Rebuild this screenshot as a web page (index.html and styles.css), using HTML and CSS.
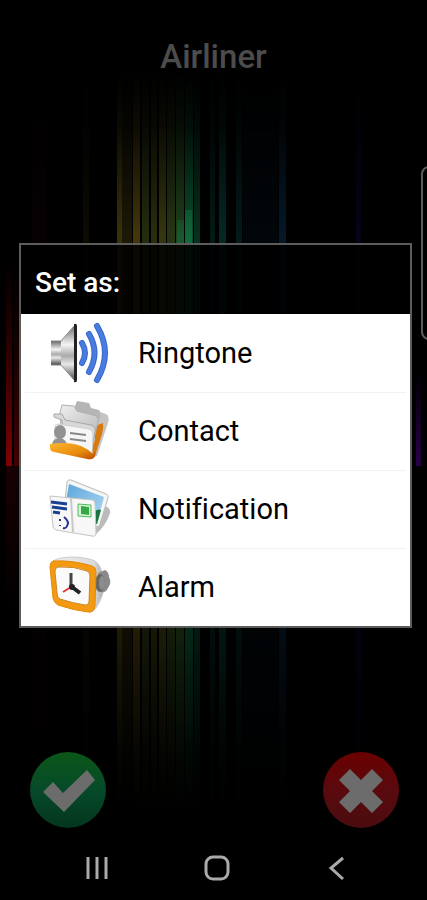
FILE: index.html
```html
<!DOCTYPE html>
<html lang="en">
<head>
  <meta charset="utf-8">
  <meta name="viewport" content="width=device-width, initial-scale=1">
  <title>Airliner</title>
  <link rel="stylesheet" href="styles.css">
</head>
<body>
  <div class="screen">
    <svg class="backdrop" viewBox="0 0 427 900" preserveAspectRatio="none" aria-hidden="true">
      <defs>
        <linearGradient id="fade" x1="0" y1="0" x2="0" y2="1">
          <stop offset="0.08" stop-color="#000"/>
          <stop offset="0.14" stop-color="#333"/>
          <stop offset="0.2" stop-color="#999"/>
          <stop offset="0.26" stop-color="#fff"/>
          <stop offset="0.51" stop-color="#fff"/>
          <stop offset="0.52" stop-color="#999"/>
          <stop offset="0.68" stop-color="#999"/>
          <stop offset="0.76" stop-color="#555"/>
          <stop offset="0.84" stop-color="#1a1a1a"/>
          <stop offset="0.9" stop-color="#000"/>
        </linearGradient>
        <linearGradient id="red" x1="0" y1="0" x2="0" y2="1">
          <stop offset="0" stop-color="#700000" stop-opacity="0"/>
          <stop offset="0.4" stop-color="#700000" stop-opacity="0.35"/>
          <stop offset="1" stop-color="#800000"/>
        </linearGradient>
        <linearGradient id="purple" x1="0" y1="0" x2="0" y2="1">
          <stop offset="0" stop-color="#280048" stop-opacity="0"/>
          <stop offset="1" stop-color="#280048"/>
        </linearGradient>
        <linearGradient id="ember" x1="0" y1="0" x2="0" y2="1">
          <stop offset="0" stop-color="#180003"/>
          <stop offset="1" stop-color="#180003" stop-opacity="0"/>
        </linearGradient>
        <linearGradient id="glow" x1="0" y1="0" x2="0" y2="1">
          <stop offset="0" stop-color="#126a3c" stop-opacity="0.5"/>
          <stop offset="1" stop-color="#126a3c"/>
        </linearGradient>
        <mask id="fade-mask"><rect width="427" height="900" fill="url(#fade)"/></mask>
      </defs>
      <g mask="url(#fade-mask)">
        <rect x="32" y="60" width="14" height="800" fill="#080103"/>
        <rect x="83" y="60" width="6" height="800" fill="#0d0a02"/>
        <rect x="117" y="60" width="5" height="800" fill="#38320a"/>
        <rect x="122" y="60" width="10" height="800" fill="#1c1805"/>
        <rect x="133" y="60" width="7" height="800" fill="#42360a"/>
        <rect x="142" y="60" width="7" height="800" fill="#242c0e"/>
        <rect x="151" y="60" width="6" height="800" fill="#2c2c0c"/>
        <rect x="159" y="60" width="7" height="800" fill="#34360f"/>
        <rect x="167" y="60" width="8" height="800" fill="#263612"/>
        <rect x="176" y="60" width="8" height="800" fill="#1f401a"/>
        <rect x="185" y="60" width="8" height="800" fill="#0a4d2a"/>
        <rect x="194" y="60" width="6" height="800" fill="#063020"/>
        <rect x="210" y="60" width="5" height="800" fill="#031a15"/>
        <rect x="219" y="60" width="7" height="800" fill="#042824"/>
        <rect x="236" y="60" width="6" height="800" fill="#031a1a"/>
        <rect x="243" y="60" width="35" height="800" fill="#01060a"/>
        <rect x="279" y="60" width="7" height="800" fill="#041828"/>
        <rect x="356" y="60" width="5" height="800" fill="#070218"/>
      </g>
      <rect x="185" y="210" width="7" height="34" fill="url(#glow)"/>
      <rect x="177" y="220" width="7" height="24" fill="url(#glow)" opacity="0.7"/>
      <rect x="6" y="260" width="6" height="206" fill="url(#red)"/>
      <rect x="14" y="260" width="5" height="206" fill="url(#red)" opacity="0.5"/>
      <rect x="6" y="466" width="12" height="150" fill="url(#ember)"/>
      <rect x="416" y="370" width="5" height="96" fill="url(#purple)"/>
    </svg>
    <div class="edge-handle"></div>

    <header class="title-bar">
      <h1>Airliner</h1>
    </header>

    <main class="content">
      <section class="dialog" role="dialog" aria-labelledby="dialog-title">
        <h2 class="dialog-title" id="dialog-title">Set as:</h2>
        <ul class="options">
          <li>
            <button class="option" type="button">
              <svg class="option-icon" viewBox="0 0 62 62" aria-hidden="true">
                <defs>
                  <linearGradient id="metal" x1="0" y1="0" x2="0" y2="1">
                    <stop offset="0" stop-color="#666"/>
                    <stop offset="0.35" stop-color="#f4f4f4"/>
                    <stop offset="0.55" stop-color="#aaa"/>
                    <stop offset="0.7" stop-color="#e8e8e8"/>
                    <stop offset="1" stop-color="#444"/>
                  </linearGradient>
                </defs>
                <path d="M2 19H14V43H2Z" fill="url(#metal)"/>
                <path d="M12 19L26 3V59L12 43Z" fill="url(#metal)"/>
                <path d="M2 19H12L26 3M2 43H12L26 59" fill="none" stroke="#888"/>
                <path d="M25 2Q28 1 28 4V58Q28 61 25 60Z" fill="#222"/>
                <g fill="none" stroke="#3569c9" stroke-width="6" stroke-linecap="round">
                  <path d="M33 21Q39 31 33 41"/>
                  <path d="M40 12Q51 31 40 50"/>
                  <path d="M48 4Q64 31 48 58"/>
                </g>
                <g fill="none" stroke="#4a7be0" stroke-width="4" stroke-linecap="round">
                  <path d="M33 21Q39 31 33 41"/>
                  <path d="M40 12Q51 31 40 50"/>
                  <path d="M48 4Q64 31 48 58"/>
                </g>
              </svg>
              <span>Ringtone</span>
            </button>
          </li>
          <li>
            <button class="option" type="button">
              <svg class="option-icon" viewBox="0 0 62 62" aria-hidden="true">
                <defs>
                  <linearGradient id="folder" x1="0" y1="0" x2="1" y2="1">
                    <stop offset="0" stop-color="#ffb52e"/>
                    <stop offset="0.6" stop-color="#e88a0c"/>
                    <stop offset="1" stop-color="#b84a00"/>
                  </linearGradient>
                  <linearGradient id="paper" x1="0" y1="0" x2="1" y2="1">
                    <stop offset="0" stop-color="#eee"/>
                    <stop offset="1" stop-color="#b8b8b8"/>
                  </linearGradient>
                </defs>
                <path d="M48 11L57 14Q61 16 59 23L48 56L42 57Z" fill="#c4c4c4"/>
                <path d="M46 26L54 23Q55 28 53 34L46 56Q44 60 39 59L46 40Z" fill="#d9780c"/>
                <path d="M26 6L28 1L40 3L42 8L50 10Q52 12 51 17L47 30L24 16Z" fill="#b5b5b5"/>
                <path d="M11 12L13 5L25 6L28 11L44 15Q50 16 49 22L45 38L12 28Z" fill="url(#paper)" stroke="#b0b0b0"/>
                <path d="M5 14L13 14L16 20L42 25Q47 26 46 32L43 46L14 36L13 20L5 17Z" fill="#d8d8d8" stroke="#a8a8a8"/>
                <path d="M6 27Q6 24 9 24L40 29Q44 30 44 34L43 54L6 46Z" fill="#f6f6f6" stroke="#d0d0d0"/>
                <ellipse cx="11" cy="32" rx="6" ry="7" fill="#929292"/>
                <path d="M3 46Q3 38 11 38Q18 39 18 47Z" fill="#929292"/>
                <path d="M21 33L37 35M21 39L37 41" stroke="#888" stroke-width="2"/>
                <path d="M1 44Q20 41 32 46Q39 49 44 54L48 46L46 56Q44 60 38 59L5 52Q1 51 1 48Z" fill="url(#folder)"/>
              </svg>
              <span>Contact</span>
            </button>
          </li>
          <li>
            <button class="option" type="button">
              <svg class="option-icon" viewBox="0 0 62 62" aria-hidden="true">
                <defs>
                  <linearGradient id="sky" x1="0" y1="0" x2="1" y2="1">
                    <stop offset="0" stop-color="#5aa5dc"/>
                    <stop offset="1" stop-color="#b5dcf3"/>
                  </linearGradient>
                </defs>
                <path d="M56 28Q62 30 61 35Q57 48 46 57L48 43Z" fill="#bbb"/>
                <path d="M18 4Q19 1 22 2L57 16Q60 17 59 20L50 49L15 34Z" fill="#f6f6f6" stroke="#b8b8b8"/>
                <path d="M20 6L55 19L48 46L16 28Z" fill="url(#sky)"/>
                <path d="M44 35Q48 30 52 32L48 46L43 46Z" fill="#18733c"/>
                <path d="M1 18L43 22Q46 22 46 25L47 55Q47 59 43 58L7 52Q4 51 4 48Z" fill="#f7f7f7" stroke="#c4c4c4"/>
                <path d="M22 20L24 54" stroke="#c8c8c8" stroke-width="2"/>
                <path d="M2 24L18 26M3 29L18 31M4 34L11 35" stroke="#183f91" stroke-width="3"/>
                <path d="M15 39Q21 44 18 48Q17 51 14 50M11 41V43M11 47V48" fill="none" stroke="#29328e" stroke-width="2"/>
                <path d="M29 26L42 27V39L29 38Z" fill="#d6f3d4" stroke="#53b95c"/>
                <path d="M32 28L40 29V37L32 36Z" fill="#36a846"/>
              </svg>
              <span>Notification</span>
            </button>
          </li>
          <li>
            <button class="option" type="button">
              <svg class="option-icon" viewBox="0 0 62 62" aria-hidden="true">
                <defs>
                  <linearGradient id="case" x1="0" y1="0" x2="1" y2="0">
                    <stop offset="0" stop-color="#eee"/>
                    <stop offset="0.8" stop-color="#dadada"/>
                    <stop offset="1" stop-color="#aaa"/>
                  </linearGradient>
                </defs>
                <path d="M4 5Q10 1 26 1Q40 2 46 5Q51 8 53 17L55 34Q50 51 43 56L36 20Z" fill="url(#case)" stroke="#ccc"/>
                <path d="M49 17L56 14Q60 16 60 21Q63 27 59 32Q57 37 52 36Z" fill="#8a8a8a"/>
                <ellipse cx="51" cy="27" rx="5" ry="9" fill="#666"/>
                <ellipse cx="53" cy="27" rx="3" ry="7" fill="#8c8c8c"/>
                <path d="M4 5Q24 4 43 10Q47 11 47 16L46 50Q45 57 39 56Q23 54 9 49Q5 47 4 42L1 11Q1 6 4 5Z" fill="#f49a10" stroke="#e28a08"/>
                <path d="M10 11Q25 10 38 15Q41 16 41 20L40 46Q39 50 36 49Q23 47 11 43Q8 42 8 37L6 16Q6 11 10 11Z" fill="#fafafa" stroke="#ca8528"/>
                <path d="M22 17V31" stroke="#444" stroke-width="3"/>
                <path d="M23 31L31 37" stroke="#222" stroke-width="4"/>
                <path d="M22 31L14 36" stroke="#e23838" stroke-width="2"/>
                <circle cx="23" cy="31" r="3" fill="#222"/>
              </svg>
              <span>Alarm</span>
            </button>
          </li>
        </ul>
      </section>
    </main>

    <div class="actions">
      <button class="round-button confirm" type="button" aria-label="Confirm">
        <svg viewBox="0 0 76 76" aria-hidden="true">
          <path d="M13 40L23 30L33 41L57 18L65 28L34 60Z" fill="#6c6c6c"/>
        </svg>
      </button>
      <button class="round-button cancel" type="button" aria-label="Cancel">
        <svg viewBox="0 0 76 76" aria-hidden="true">
          <path d="M27 17L38 28L49 17L60 28L49 39L60 50L49 61L38 50L27 61L16 50L27 39L16 28Z" fill="#6c6c6c"/>
        </svg>
      </button>
    </div>

    <nav class="system-nav">
      <button type="button" aria-label="Recent apps">
        <svg viewBox="0 0 28 28" aria-hidden="true"><path d="M5 3V25M14 3V25M23 3V25" stroke-width="3"/></svg>
      </button>
      <button type="button" aria-label="Home">
        <svg viewBox="0 0 28 28" aria-hidden="true"><rect x="3" y="3" width="22" height="22" rx="7" stroke-width="3"/></svg>
      </button>
      <button type="button" aria-label="Back">
        <svg viewBox="0 0 28 28" aria-hidden="true"><path d="M20 4L8 14L20 25" stroke-width="3"/></svg>
      </button>
    </nav>
  </div>
</body>
</html>
```
FILE: styles.css
```css
* {
  box-sizing: border-box;
}

body {
  margin: 0;
  background-color: #000;
  font-family: Roboto, "Noto Sans", sans-serif;
}

button {
  border: none;
  padding: 0;
  font-family: inherit;
  cursor: pointer;
}

.screen {
  position: relative;
  display: flex;
  flex-direction: column;
  min-height: 100vh;
  overflow: hidden;
  isolation: isolate;
}

.backdrop {
  position: absolute;
  inset: 0;
  width: 100%;
  height: 100%;
  z-index: -1;
}

.edge-handle {
  position: absolute;
  top: 166px;
  right: -16px;
  width: 22px;
  height: 174px;
  border: 2px solid #5c5c5c;
  border-radius: 8px;
}

.title-bar {
  height: 118px;
  padding-top: 37px;
  text-align: center;
}

.title-bar h1 {
  margin: 0;
  color: #4c4c4c;
  font-size: 33px;
  font-weight: 500;
  line-height: 40px;
}

.content {
  flex: 1;
  display: flex;
  align-items: center;
  padding: 0 15px 0 19px;
}

.dialog {
  flex: 1;
  border: 2px solid #5c5c5c;
}

.dialog-title {
  margin: 0;
  padding: 18px 14px 11px;
  background-color: rgba(0, 0, 0, 0.85);
  color: #fff;
  font-size: 28px;
  font-weight: 500;
  line-height: 40px;
}

.options {
  margin: 0;
  padding: 0;
  background-color: #fff;
  list-style: none;
}

.options li {
  padding: 0 4px;
}

.options li + li .option {
  border-top: 1px solid #f2f2f2;
}

.option {
  display: flex;
  align-items: center;
  gap: 27px;
  width: 100%;
  height: 78px;
  padding: 0 24px;
  background-color: transparent;
  color: #000;
  font-size: 29px;
  font-variant-ligatures: none;
  text-align: left;
}

.option-icon {
  width: 62px;
  height: 62px;
}

.actions {
  display: flex;
  justify-content: space-between;
  padding: 0 28px 8px 30px;
}

.round-button {
  width: 76px;
  height: 76px;
  border-radius: 50%;
}

.round-button svg {
  display: block;
}

.confirm {
  background: linear-gradient(#0b5718, #064a2a 50%, #04351d);
}

.cancel {
  background: linear-gradient(#6a0000, #5a0a0e 50%, #4a0c0e);
}

.system-nav {
  display: flex;
  justify-content: space-between;
  align-items: center;
  height: 64px;
  padding: 0 76px 0 83px;
}

.system-nav button {
  background-color: transparent;
}

.system-nav svg {
  display: block;
  width: 28px;
  height: 28px;
  fill: none;
  stroke: #aaa;
}
```
